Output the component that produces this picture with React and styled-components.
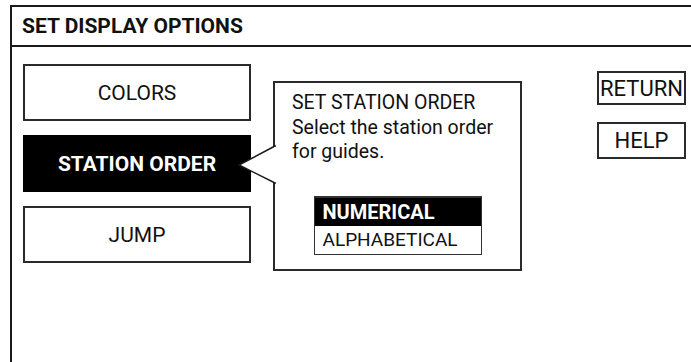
import React from "react";
import styled, { createGlobalStyle } from "styled-components";

const Global = createGlobalStyle`
  html, body { margin: 0; padding: 0; background: #fff; }
  body { font-family: Roboto, "Open Sans", sans-serif; color: #111; overflow: hidden; }
  #root { width: 691px; height: 362px; }
`;

const Frame = styled.div`
  box-sizing: border-box;
  margin: 5px 0 0 10px;
  width: 681px;
  height: 357px;
  border-left: 2px solid #1a1a1a;
  border-top: 2px solid #1a1a1a;
  display: flex;
  flex-direction: column;
`;

const Header = styled.div`
  height: 38px;
  border-bottom: 2px solid #1a1a1a;
  display: flex;
  align-items: center;
  padding-left: 10px;
  font-weight: 700;
  font-size: 21px;
`;

const Body = styled.div`
  flex: 1;
  display: flex;
  align-items: flex-start;
  padding: 17px 5px 0 11px;
`;

const MenuColumn = styled.div`
  display: flex;
  flex-direction: column;
  gap: 14px;
`;

const MenuButton = styled.div`
  box-sizing: border-box;
  width: 228px;
  height: 57px;
  display: flex;
  align-items: center;
  justify-content: center;
  font-size: 21px;
  border: 2px solid ${(p) => (p.$active ? "#000" : "#2a2a2a")};
  background: ${(p) => (p.$active ? "#000" : "#fff")};
  color: ${(p) => (p.$active ? "#fff" : "#111")};
  font-weight: ${(p) => (p.$active ? 700 : 400)};
`;

const Popup = styled.div`
  position: relative;
  box-sizing: border-box;
  width: 249px;
  margin: 17px 0 0 22px;
  border: 2px solid #2a2a2a;
  background: #fff;
  padding: 8px 10px 14px 17px;
  display: flex;
  flex-direction: column;
`;

const Arrow = styled.svg`
  position: absolute;
  left: -37px;
  top: 62px;
  overflow: visible;
`;

const PopupText = styled.div`
  font-size: 19.5px;
  line-height: 24.5px;
`;

const OptionList = styled.div`
  box-sizing: border-box;
  align-self: center;
  margin: 31px 0 0 -7px;
  width: 168px;
  border: 1px solid #333;
  border-top-width: 2px;
  display: flex;
  flex-direction: column;
`;

const Option = styled.div`
  height: 28px;
  line-height: 28px;
  padding-left: 8px;
  font-size: ${(p) => (p.$selected ? 20 : 19)}px;
  background: ${(p) => (p.$selected ? "#000" : "#fff")};
  color: ${(p) => (p.$selected ? "#fff" : "#111")};
  font-weight: ${(p) => (p.$selected ? 700 : 400)};
`;

const SideColumn = styled.div`
  margin: 7px 0 0 auto;
  display: flex;
  flex-direction: column;
  gap: 17px;
`;

const SideButton = styled.div`
  box-sizing: border-box;
  width: 89px;
  height: ${(p) => p.$h}px;
  border: 2px solid #2a2a2a;
  display: flex;
  align-items: center;
  justify-content: center;
  font-size: 22px;
`;

export default function App() {
  return (
    <>
      <Global />
      <Frame>
        <Header>SET DISPLAY OPTIONS</Header>
        <Body>
          <MenuColumn>
            <MenuButton>COLORS</MenuButton>
            <MenuButton $active>STATION ORDER</MenuButton>
            <MenuButton>JUMP</MenuButton>
          </MenuColumn>
          <Popup>
            <Arrow width="37" height="40" viewBox="0 0 37 40">
              <polygon points="37,1 1,20 37,38" fill="#fff" stroke="#1a1a1a" strokeWidth="1.5" />
              <rect x="36" y="2" width="3" height="35" fill="#fff" />
            </Arrow>
            <PopupText>
              SET STATION ORDER
              <br />
              Select the station order
              <br />
              for guides.
            </PopupText>
            <OptionList>
              <Option $selected>NUMERICAL</Option>
              <Option>ALPHABETICAL</Option>
            </OptionList>
          </Popup>
          <SideColumn>
            <SideButton $h={34}>RETURN</SideButton>
            <SideButton $h={37}>HELP</SideButton>
          </SideColumn>
        </Body>
      </Frame>
    </>
  );
}
